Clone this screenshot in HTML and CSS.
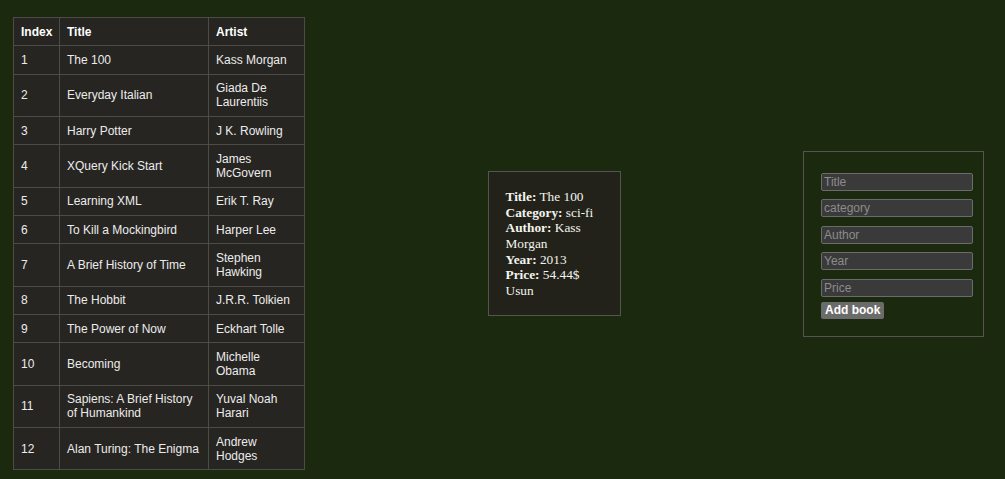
FILE: index.html
```html
<!DOCTYPE html>
<html>
<head>
<meta charset="utf-8">
<link rel="stylesheet" href="styles.css">
</head>
<body>
<div class="page">
  <table class="books">
    <colgroup><col class="c-idx"><col class="c-title"><col class="c-artist"></colgroup>
    <thead>
      <tr><th>Index</th><th>Title</th><th>Artist</th></tr>
    </thead>
    <tbody>
      <tr><td>1</td><td>The 100</td><td>Kass Morgan</td></tr>
      <tr><td>2</td><td>Everyday Italian</td><td>Giada De Laurentiis</td></tr>
      <tr><td>3</td><td>Harry Potter</td><td>J K. Rowling</td></tr>
      <tr><td>4</td><td>XQuery Kick Start</td><td>James McGovern</td></tr>
      <tr><td>5</td><td>Learning XML</td><td>Erik T. Ray</td></tr>
      <tr><td>6</td><td>To Kill a Mockingbird</td><td>Harper Lee</td></tr>
      <tr><td>7</td><td>A Brief History of Time</td><td>Stephen Hawking</td></tr>
      <tr><td>8</td><td>The Hobbit</td><td>J.R.R. Tolkien</td></tr>
      <tr><td>9</td><td>The Power of Now</td><td>Eckhart Tolle</td></tr>
      <tr><td>10</td><td>Becoming</td><td>Michelle Obama</td></tr>
      <tr><td>11</td><td>Sapiens: A Brief History of Humankind</td><td>Yuval Noah Harari</td></tr>
      <tr><td>12</td><td>Alan Turing: The Enigma</td><td>Andrew Hodges</td></tr>
    </tbody>
  </table>

  <div class="details">
    <b>Title:</b> The 100<br>
    <b>Category:</b> sci-fi<br>
    <b>Author:</b> Kass Morgan<br>
    <b>Year:</b> 2013<br>
    <b>Price:</b> 54.44$<br>
    Usun
  </div>

  <form class="add-form">
    <div class="fields">
      <input class="field" type="text" placeholder="Title">
      <input class="field" type="text" placeholder="category">
      <input class="field" type="text" placeholder="Author">
      <input class="field" type="text" placeholder="Year">
      <input class="field" type="text" placeholder="Price">
    </div>
    <button class="add-btn" type="button">Add book</button>
  </form>
</div>
</body>
</html>
```

FILE: styles.css
```css
html, body {
  margin: 0;
  padding: 0;
  background: #1b2a0f;
}

body {
  font-family: "Liberation Sans", Arial, sans-serif;
  font-size: 12px;
  color: #ececec;
}

.page {
  display: flex;
  align-items: center;
  justify-content: space-between;
  padding: 17px 21px 10px 13px;
}

.books {
  border-collapse: collapse;
  table-layout: fixed;
  width: 291px;
  background: #262521;
  border: 1px solid #4c4b46;
}

.c-idx { width: 46px; }
.c-title { width: 149px; }
.c-artist { width: 96px; }

.books th,
.books td {
  border: 1px solid #4c4b46;
  padding: 6.68px 7px;
  text-align: left;
  vertical-align: middle;
  line-height: normal;
}

.books th {
  font-weight: bold;
  color: #ffffff;
}

.details {
  width: 97px;
  padding: 17px;
  background: #22221a;
  border: 1px solid #55554f;
  font-family: "Liberation Serif", "Times New Roman", serif;
  font-size: 13.33px;
  line-height: 15.6px;
  color: #f4f4ee;
}

.add-form {
  display: flex;
  flex-direction: column;
  align-items: flex-start;
  width: 152px;
  padding: 21px 10px 17px 17px;
  border: 1px solid #55554f;
  margin: 0;
}

.fields {
  display: flex;
  flex-direction: column;
  gap: 8.6px;
}

.field {
  box-sizing: border-box;
  width: 152px;
  height: 18px;
  margin: 0;
  padding: 0 2px;
  background: #3a3a3a;
  border: 1px solid #6b6b6b;
  border-radius: 2px;
  font-family: "Liberation Sans", Arial, sans-serif;
  font-size: 12px;
  color: #dddddd;
  outline: none;
}

.field::placeholder {
  color: #8c8c8c;
}

.add-btn {
  margin-top: 5px;
  height: 17px;
  padding: 0 4px;
  background: #6b6b6b;
  border: none;
  border-radius: 2px;
  font-family: "Liberation Sans", Arial, sans-serif;
  font-size: 12px;
  font-weight: bold;
  color: #ffffff;
  line-height: 17px;
}
```
